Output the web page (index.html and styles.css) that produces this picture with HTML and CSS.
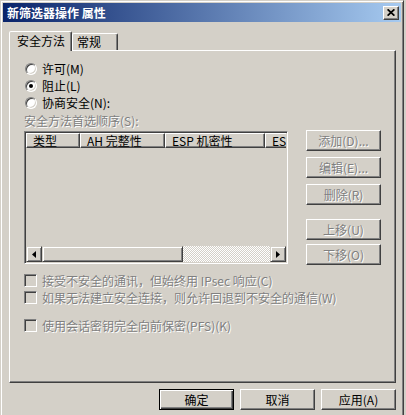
FILE: index.html
```html
<!DOCTYPE html>
<html lang="zh-CN">
<head>
    <meta charset="UTF-8">
    <title>新筛选器操作 属性</title>
    <link rel="stylesheet" href="styles.css">
</head>
<body>
    <div class="screen">
        <div class="window">
            <div class="titlebar">
                <span class="title">新筛选器操作 属性</span>
                <div class="close">
                    <svg width="8" height="7" viewBox="0 0 8 7"><path d="M0.6 0.3 L7.4 6.7 M7.4 0.3 L0.6 6.7" stroke="#000" stroke-width="1.7"/></svg>
                </div>
            </div>

            <div class="content">
                <div class="tabs">
                    <div class="tab active">安全方法</div>
                    <div class="tab">常规</div>
                </div>

                <div class="panel">
                    <div class="options">
                        <label class="radio-row"><span class="radio"></span>许可(M)</label>
                        <label class="radio-row"><span class="radio checked"></span>阻止(L)</label>
                        <label class="radio-row"><span class="radio"></span>协商安全(N):</label>
                    </div>

                    <div class="caption disabled">安全方法首选顺序(S):</div>

                    <div class="list-area">
                        <div class="list">
                            <div class="list-head">
                                <div class="col col-type">类型</div>
                                <div class="col col-ah">AH 完整性</div>
                                <div class="col col-esp">ESP 机密性</div>
                                <div class="col col-rest">ESP</div>
                            </div>
                            <div class="list-body"></div>
                            <div class="hscroll">
                                <div class="sb-btn">
                                    <svg width="4" height="7" viewBox="0 0 4 7"><polygon points="4,0 4,7 0,3.5" fill="#000"/></svg>
                                </div>
                                <div class="thumb"></div>
                                <div class="track"></div>
                                <div class="sb-btn">
                                    <svg width="4" height="7" viewBox="0 0 4 7"><polygon points="0,0 0,7 4,3.5" fill="#000"/></svg>
                                </div>
                            </div>
                        </div>

                        <div class="side">
                            <div class="btn disabled">添加(D)...</div>
                            <div class="btn disabled">编辑(E)...</div>
                            <div class="btn disabled">删除(R)</div>
                            <div class="btn disabled btn-up">上移(U)</div>
                            <div class="btn disabled btn-down">下移(O)</div>
                        </div>
                    </div>

                    <div class="checks">
                        <div class="check-row disabled"><span class="checkbox"></span>接受不安全的通讯，但始终用 IPsec 响应(C)</div>
                        <div class="check-row disabled"><span class="checkbox"></span>如果无法建立安全连接，则允许回退到不安全的通信(W)</div>
                        <div class="check-row check-pfs disabled"><span class="checkbox"></span>使用会话密钥完全向前保密(PFS)(K)</div>
                    </div>
                </div>

                <div class="footer">
                    <div class="btn btn-default">确定</div>
                    <div class="btn">取消</div>
                    <div class="btn">应用(A)</div>
                </div>
            </div>
        </div>
    </div>
</body>
</html>
```

FILE: styles.css
```css
* {
    box-sizing: border-box;
}

body {
    margin: 0;
    background: #d4d0c8;
    font-family: "Noto Sans CJK SC", "Noto Sans", sans-serif;
    font-size: 12px;
    color: #000;
}

.screen {
    width: 406px;
    height: 415px;
    overflow: hidden;
}

/* window frame: classic 3d border */
.window {
    width: 404px;
    height: 430px;
    background: #d4d0c8;
    border: 1px solid;
    border-color: #d4d0c8 #404040 #404040 #d4d0c8;
    box-shadow: inset 1px 1px #fff, inset -1px -1px #808080;
    padding: 2px;
}

.titlebar {
    height: 19px;
    display: flex;
    align-items: center;
    justify-content: space-between;
    padding: 0 2px;
    background: linear-gradient(to right, #0a246a, #a6caf0);
}

.title {
    color: #fff;
    font-weight: bold;
    line-height: 19px;
    padding-left: 2px;
}

.close {
    width: 16px;
    height: 14px;
    display: flex;
    align-items: center;
    justify-content: center;
    background: #d4d0c8;
    border: 1px solid;
    border-color: #fff #404040 #404040 #fff;
    box-shadow: inset -1px -1px #808080;
}

.content {
    padding: 0 5px 0 6px;
}

/* tabs */
.tabs {
    display: flex;
    align-items: flex-end;
    height: 19px;
    margin-top: 9px;
}

.tab {
    height: 17px;
    width: 46px;
    padding-left: 4px;
    line-height: 16px;
    border: 1px solid;
    border-bottom: 0;
    border-color: #fff #404040 transparent #fff;
    border-radius: 2px 2px 0 0;
    box-shadow: inset -1px 0 #808080;
}

.tab.active {
    position: relative;
    z-index: 1;
    width: 63px;
    height: 20px;
    margin-bottom: -1px;
    padding-left: 7px;
    line-height: 17px;
    background: #d4d0c8;
}

.panel {
    height: 333px;
    border: 1px solid;
    border-color: #fff #404040 #404040 #fff;
    box-shadow: inset -1px -1px #808080;
}

.disabled {
    color: #808080;
    text-shadow: 1px 1px #fff;
}

/* radio buttons */
.options {
    margin: 9px 0 0 15px;
}

.radio-row {
    display: flex;
    align-items: center;
    gap: 5px;
    height: 17px;
}

.radio {
    position: relative;
    width: 12px;
    height: 12px;
    border-radius: 50%;
    background: #fff;
    border: 1px solid;
    border-color: #808080 #fff #fff #808080;
    box-shadow: inset 1px 1px #404040, inset -1px -1px #d4d0c8;
}

.radio.checked::after {
    content: "";
    position: absolute;
    left: 3px;
    top: 3px;
    width: 4px;
    height: 4px;
    border-radius: 50%;
    background: #000;
}

.caption {
    margin: 3px 0 0 14px;
    line-height: 14px;
}

/* list view */
.list-area {
    display: flex;
    gap: 18px;
    margin: 3px 0 0 14px;
}

.list {
    width: 264px;
    height: 133px;
    display: flex;
    flex-direction: column;
    padding: 1px;
    border: 1px solid;
    border-color: #808080 #fff #fff #808080;
    box-shadow: inset 1px 1px #404040, inset -1px -1px #d4d0c8;
}

.list-head {
    display: flex;
    height: 15px;
    overflow: hidden;
}

.col {
    flex: none;
    height: 15px;
    line-height: 13px;
    white-space: nowrap;
    overflow: hidden;
    border: 1px solid;
    border-color: #fff #404040 #404040 #fff;
    box-shadow: inset -1px -1px #808080;
    padding-left: 6px;
}

.col-type { width: 54px; }
.col-ah { width: 85px; }
.col-esp { width: 100px; }
.col-rest { flex: 1; border-right: 0; box-shadow: inset 0 -1px #808080; }

.list-body {
    flex: 1;
}

.hscroll {
    display: flex;
    height: 16px;
}

.sb-btn,
.thumb {
    display: flex;
    align-items: center;
    justify-content: center;
    border: 1px solid;
    border-color: #d4d0c8 #404040 #404040 #d4d0c8;
    box-shadow: inset 1px 1px #fff, inset -1px -1px #808080;
}

.sb-btn {
    width: 16px;
}

.thumb {
    width: 141px;
}

.track {
    flex: 1;
    background: repeating-conic-gradient(#fff 0 25%, #d4d0c8 0 50%) 0 0 / 2px 2px;
}

/* buttons */
.btn {
    width: 75px;
    height: 21px;
    line-height: 19px;
    text-align: center;
    white-space: nowrap;
    border: 1px solid;
    border-color: #fff #404040 #404040 #fff;
    box-shadow: inset -1px -1px #808080;
}

.side {
    display: flex;
    flex-direction: column;
    gap: 6px;
    margin-top: -1px;
}

.side .btn-up {
    margin-top: 8px;
}

.side .btn-down {
    margin-top: -2px;
}

.btn-default {
    border: 1px solid #000;
    box-shadow: inset 1px 1px #fff, inset -1px -1px #404040, inset -2px -2px #808080;
}

/* check boxes */
.checks {
    margin: 7px 0 0 14px;
}

.check-row {
    display: flex;
    align-items: center;
    gap: 5px;
    height: 17px;
    white-space: nowrap;
}

.check-pfs {
    margin-top: 11px;
}

.checkbox {
    flex: none;
    width: 13px;
    height: 13px;
    background: #d4d0c8;
    border: 1px solid;
    border-color: #808080 #fff #fff #808080;
    box-shadow: inset 1px 1px #404040, inset -1px -1px #d4d0c8;
}

.footer {
    display: flex;
    justify-content: flex-end;
    gap: 6px;
    margin-top: 6px;
}
```
